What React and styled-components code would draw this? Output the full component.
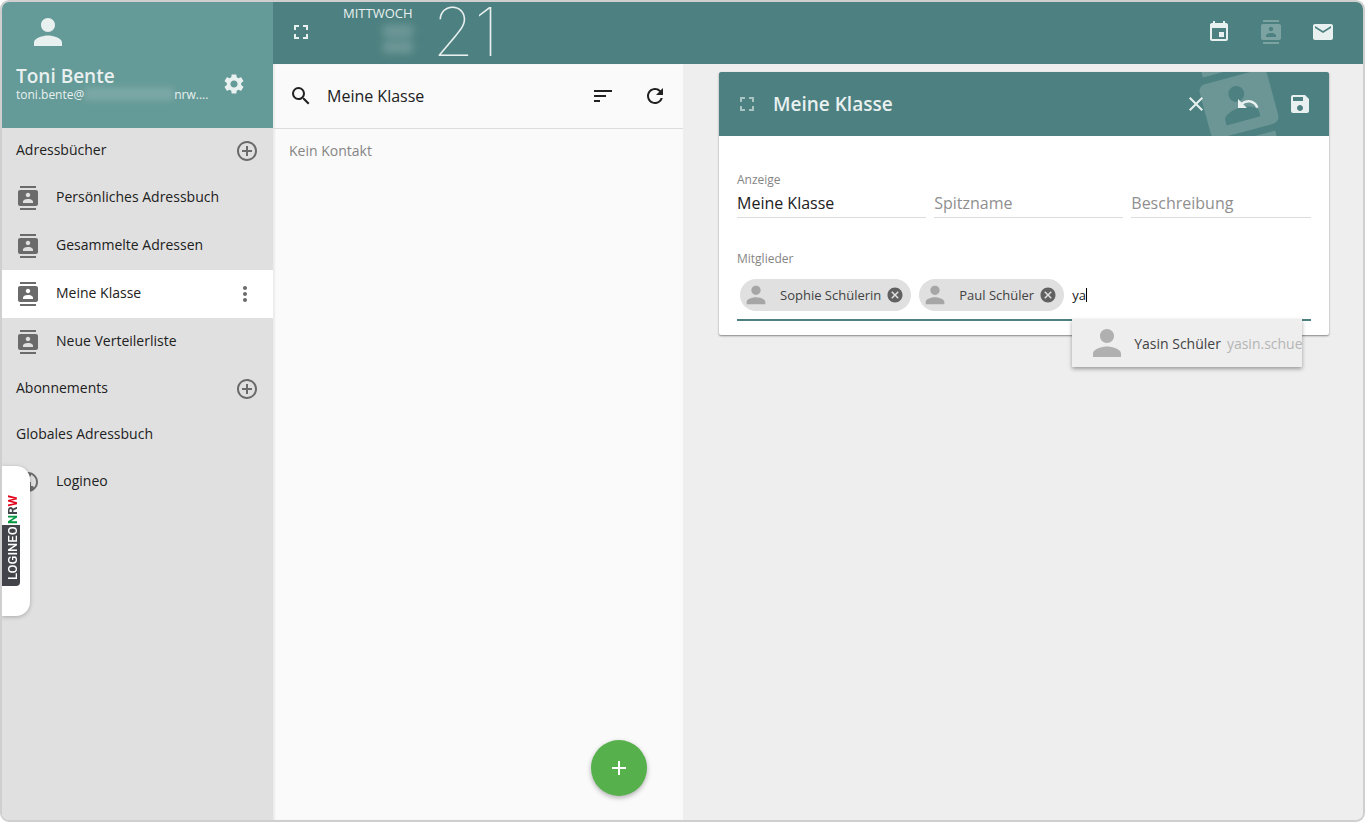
import React, { useState } from "react";
import styled, { createGlobalStyle, ThemeProvider } from "styled-components";
import {
  MdAdd,
  MdAddCircleOutline,
  MdCancel,
  MdClose,
  MdContacts,
  MdEmail,
  MdEvent,
  MdFullscreen,
  MdMoreVert,
  MdPerson,
  MdPublic,
  MdRefresh,
  MdSave,
  MdSearch,
  MdSettings,
  MdSort,
  MdUndo,
} from "react-icons/md";

const theme = {
  primary: "#4d8080",
  primaryLight: "#649a97",
  accent: "#56b04c",
  sidebar: "#e0e0e0",
  list: "#fafafa",
  page: "#eeeeee",
  onPrimary: "#e9f0f0",
  text: "#212121",
  muted: "#858585",
  icon: "#6b6b6b",
  divider: "#dcdcdc",
};

const GlobalStyle = createGlobalStyle`
* { box-sizing: border-box; }
body {
  margin: 0;
  background: #fff;
  color: ${theme.text};
  font-family: "Open Sans", "Noto Sans", sans-serif;
  font-size: 14px;
}
button, input { font: inherit; color: inherit; }
svg { display: block; }
`;

const Frame = styled.div`
  position: relative;
  display: flex;
  min-height: 100vh;
  overflow: hidden;
  border: 2px solid #cfcfcf;
  border-radius: 9px;
  background: ${(props) => props.theme.page};
`;

const IconButton = styled.button`
  display: flex;
  align-items: center;
  justify-content: center;
  flex: none;
  width: ${(props) => props.$size || 40}px;
  height: ${(props) => props.$size || 40}px;
  padding: 0;
  border: none;
  border-radius: 50%;
  background: none;
  color: inherit;
  font-size: ${(props) => props.$icon || 24}px;
  opacity: ${(props) => (props.$dim ? props.$dim : 1)};
  cursor: pointer;
`;

/* sidebar */
const Sidebar = styled.aside`
  flex: none;
  width: 271px;
  background: ${(props) => props.theme.sidebar};
`;

const Profile = styled.div`
  height: 126px;
  padding: 9px 19px 0 14px;
  background: ${(props) => props.theme.primaryLight};
  color: ${(props) => props.theme.onPrimary};
`;

const Avatar = styled.div`
  padding-left: 11px;
  font-size: 42px;
`;

const ProfileRow = styled.div`
  display: flex;
  align-items: center;
  justify-content: space-between;
  margin-top: 11px;
`;

const ProfileName = styled.div`
  font-size: 19px;
  font-weight: 600;
  line-height: 22px;
`;

const ProfileMail = styled.div`
  display: flex;
  font-size: 12px;
  line-height: 16px;
`;

const MailBlur = styled.span`
  width: 90px;
  height: 14px;
  background: rgba(255, 255, 255, 0.14);
  filter: blur(3px);
`;

const SubHeader = styled.div`
  display: flex;
  align-items: center;
  justify-content: space-between;
  height: 46px;
  padding: 0 14px;
  line-height: 20px;
`;

const SubHeaderText = styled.span`
  padding-bottom: 2px;
`;

const BookList = styled.ul`
  margin: 0;
  padding: 0;
  list-style: none;
`;

const BookItem = styled.li`
  display: flex;
  align-items: center;
  height: 48px;
  padding: 0 16px 0 14px;
  background: ${(props) => (props.$active ? "#fff" : "transparent")};
  color: ${(props) => props.theme.icon};
  font-size: 24px;
`;

const BookLink = styled.a`
  flex: 1;
  padding: 0 0 2px 16px;
  color: ${(props) => props.theme.text};
  font-size: 14px;
  line-height: 20px;
  text-decoration: none;
`;

/* logo tab on the left edge */
const LogoTab = styled.a`
  position: absolute;
  left: 0;
  top: 464px;
  display: flex;
  flex-direction: column;
  align-items: flex-start;
  width: 28px;
  height: 150px;
  padding-top: 28px;
  border-radius: 0 14px 14px 0;
  background: #fff;
  box-shadow: 0 1px 4px rgba(0, 0, 0, 0.25);
  font-family: Roboto, sans-serif;
  font-size: 13px;
  line-height: 22px;
  text-decoration: none;
`;

const LogoState = styled.span`
  writing-mode: vertical-rl;
  transform: rotate(180deg);
  width: 18px;
  height: 31px;
  padding-top: 1px;
  color: #43444a;
  font-weight: 700;
`;

const LogoLetter = styled.span`
  color: ${(props) => props.$color};
`;

const LogoName = styled.span`
  writing-mode: vertical-rl;
  transform: rotate(180deg);
  width: 18px;
  height: 61px;
  padding-top: 6px;
  border-radius: 4px 0 0 0;
  background: #43444a;
  color: #fff;
  font-weight: 500;
`;

/* main area */
const Main = styled.div`
  display: flex;
  flex: 1;
  flex-direction: column;
  min-width: 0;
`;

const TopBar = styled.header`
  display: flex;
  align-items: center;
  height: 62px;
  padding: 0 20px 2px 8px;
  background: ${(props) => props.theme.primary};
  color: ${(props) => props.theme.onPrimary};
`;

const DateBox = styled.div`
  display: flex;
  align-items: flex-start;
  flex: 1;
  gap: 20px;
  padding-left: 22px;
`;

const DateText = styled.div`
  display: flex;
  flex-direction: column;
  align-items: flex-end;
  padding-top: 1px;
  font-size: 13px;
  line-height: 20px;
`;

const DateBlur = styled.span`
  width: 30px;
  height: 12px;
  margin: 2px 0;
  background: rgba(255, 255, 255, 0.2);
  filter: blur(4px);
`;

const DayNumber = styled.div`
  font-family: Inter, sans-serif;
  font-size: 67px;
  font-weight: 100;
  line-height: 60px;
`;

const TopActions = styled.nav`
  display: flex;
  gap: 12px;
`;

const Columns = styled.div`
  display: flex;
  flex: 1;
`;

const ListPane = styled.section`
  display: flex;
  flex: none;
  flex-direction: column;
  width: 410px;
  background: ${(props) => props.theme.list};
  box-shadow: inset 2px 0 2px rgba(0, 0, 0, 0.06);
`;

const ListBar = styled.div`
  display: flex;
  align-items: center;
  height: 65px;
  padding: 0 8px;
  border-bottom: 1px solid ${(props) => props.theme.divider};
`;

const ListTitle = styled.h2`
  flex: 1;
  margin: 0;
  padding-left: 6px;
  font-size: 16px;
  font-weight: 400;
  line-height: 24px;
`;

const ListActions = styled.div`
  display: flex;
  gap: 12px;
`;

const EmptyText = styled.p`
  flex: 1;
  margin: 0;
  padding: 12px 16px;
  color: ${(props) => props.theme.muted};
  line-height: 20px;
`;

const AddButton = styled(IconButton)`
  align-self: flex-end;
  margin: 0 36px 24px 0;
  background: ${(props) => props.theme.accent};
  box-shadow: 0 2px 5px rgba(0, 0, 0, 0.3);
  color: #fff;
`;

const DetailPane = styled.section`
  flex: 1;
  min-width: 0;
  padding: 8px 34px 0 36px;
`;

const Card = styled.form`
  border-radius: 2px;
  background: #fff;
  box-shadow: 0 1px 2px rgba(0, 0, 0, 0.45);
`;

const CardHeader = styled.div`
  position: relative;
  display: flex;
  align-items: center;
  height: 64px;
  padding: 0 9px 0 8px;
  overflow: hidden;
  border-radius: 2px 2px 0 0;
  background: ${(props) => props.theme.primary};
  color: ${(props) => props.theme.onPrimary};
`;

const Watermark = styled.div`
  position: absolute;
  top: -10px;
  right: 48px;
  font-size: 84px;
  opacity: 0.2;
  transform: rotate(-15deg);
`;

const CardTitle = styled.h1`
  flex: 1;
  margin: 0;
  padding-left: 6px;
  font-size: 19px;
  font-weight: 600;
  line-height: 24px;
`;

const CardActions = styled.div`
  position: relative;
  display: flex;
  gap: 12px;
`;

const CardBody = styled.div`
  padding: 36px 18px 14px;
`;

const FieldRow = styled.div`
  display: grid;
  grid-template-columns: 20fr 20fr 19fr;
  gap: 8px;
`;

const Field = styled.div`
  display: flex;
  flex-direction: column;
`;

const Label = styled.label`
  display: block;
  height: 16px;
  color: ${(props) => props.theme.muted};
  font-size: 12px;
  line-height: 16px;
`;

const TextInput = styled.input`
  width: 100%;
  height: 30px;
  padding: 0;
  border: none;
  border-bottom: 1px solid ${(props) => props.theme.divider};
  outline: none;
  background: none;
  font-size: 16px;
  &::placeholder {
    color: #8f8f8f;
    opacity: 1;
  }
`;

const Members = styled.div`
  padding-top: 33px;
`;

const ChipRow = styled.div`
  display: flex;
  align-items: center;
  gap: 8px;
  padding: 12px 3px 8px;
  border-bottom: 2px solid ${(props) => props.theme.primary};
`;

const Chip = styled.span`
  display: flex;
  align-items: center;
  height: 32px;
  padding: 0 7px 0 2px;
  border-radius: 16px;
  background: #e0e0e0;
  color: #424242;
  font-size: 13px;
`;

const ChipIcon = styled.span`
  color: #a6a6a6;
  font-size: 28px;
`;

const ChipText = styled.span`
  padding: 0 5px 0 10px;
`;

const ChipRemove = styled(IconButton)`
  color: #616161;
`;

const Search = styled.div`
  position: relative;
  display: flex;
  align-items: center;
`;

const SearchInput = styled.input`
  field-sizing: content;
  padding: 0;
  border: none;
  outline: none;
  background: none;
  font-size: 13px;
`;

const Caret = styled.span`
  width: 1px;
  height: 14px;
  background: #000;
`;

const Suggestions = styled.ul`
  position: absolute;
  top: 100%;
  left: 0;
  width: 230px;
  margin: 15px 0 0;
  padding: 0;
  overflow: hidden;
  background: #eeeeee;
  box-shadow: 0 2px 4px rgba(0, 0, 0, 0.35);
  list-style: none;
`;

const Suggestion = styled.li`
  display: flex;
  align-items: center;
  height: 48px;
  padding-left: 14px;
  white-space: nowrap;
`;

const SuggestionIcon = styled.span`
  color: #b0b0b0;
  font-size: 42px;
`;

const SuggestionName = styled.span`
  padding: 0 6px;
  color: #424242;
`;

const SuggestionMail = styled.span`
  color: #b5b5b5;
`;

const books = [
  "Persönliches Adressbuch",
  "Gesammelte Adressen",
  "Meine Klasse",
  "Neue Verteilerliste",
];

const App = () => {
  const [name, setName] = useState("Meine Klasse");
  const [query, setQuery] = useState("ya");
  const [members, setMembers] = useState(["Sophie Schülerin", "Paul Schüler"]);

  return (
    <ThemeProvider theme={theme}>
      <GlobalStyle />
      <Frame>
        <Sidebar>
          <Profile>
            <Avatar><MdPerson /></Avatar>
            <ProfileRow>
              <div>
                <ProfileName>Toni Bente</ProfileName>
                <ProfileMail>
                  toni.bente@<MailBlur />nrw....
                </ProfileMail>
              </div>
              <IconButton aria-label="Einstellungen"><MdSettings /></IconButton>
            </ProfileRow>
          </Profile>
          <SubHeader>
            <SubHeaderText>Adressbücher</SubHeaderText>
            <IconButton $size={24} aria-label="Adressbuch hinzufügen"><MdAddCircleOutline color={theme.icon} /></IconButton>
          </SubHeader>
          <BookList>
            {books.map((book) => (
              <BookItem key={book} $active={book === "Meine Klasse"}>
                <MdContacts />
                <BookLink href="#">{book}</BookLink>
                {book === "Meine Klasse" && (
                  <IconButton $size={24} aria-label="Optionen"><MdMoreVert /></IconButton>
                )}
              </BookItem>
            ))}
          </BookList>
          <SubHeader>
            <SubHeaderText>Abonnements</SubHeaderText>
            <IconButton $size={24} aria-label="Abonnement hinzufügen"><MdAddCircleOutline color={theme.icon} /></IconButton>
          </SubHeader>
          <SubHeader>
            <SubHeaderText>Globales Adressbuch</SubHeaderText>
          </SubHeader>
          <BookList>
            <BookItem>
              <MdPublic />
              <BookLink href="#">Logineo</BookLink>
            </BookItem>
          </BookList>
        </Sidebar>

        <Main>
          <TopBar>
            <IconButton aria-label="Vollbild"><MdFullscreen /></IconButton>
            <DateBox>
              <DateText>
                MITTWOCH
                <DateBlur />
                <DateBlur />
              </DateText>
              <DayNumber>21</DayNumber>
            </DateBox>
            <TopActions>
              <IconButton aria-label="Kalender"><MdEvent /></IconButton>
              <IconButton $dim={0.3} aria-label="Adressbuch"><MdContacts /></IconButton>
              <IconButton aria-label="E-Mail"><MdEmail /></IconButton>
            </TopActions>
          </TopBar>

          <Columns>
            <ListPane>
              <ListBar>
                <IconButton aria-label="Suchen"><MdSearch /></IconButton>
                <ListTitle>Meine Klasse</ListTitle>
                <ListActions>
                  <IconButton aria-label="Sortieren"><MdSort /></IconButton>
                  <IconButton aria-label="Aktualisieren"><MdRefresh /></IconButton>
                </ListActions>
              </ListBar>
              <EmptyText>Kein Kontakt</EmptyText>
              <AddButton $size={56} aria-label="Neu"><MdAdd /></AddButton>
            </ListPane>

            <DetailPane>
              <Card onSubmit={(e) => e.preventDefault()}>
                <CardHeader>
                  <Watermark><MdContacts /></Watermark>
                  <IconButton type="button" $dim={0.6} aria-label="Vollbild"><MdFullscreen /></IconButton>
                  <CardTitle>Meine Klasse</CardTitle>
                  <CardActions>
                    <IconButton type="button" aria-label="Schließen"><MdClose /></IconButton>
                    <IconButton type="button" aria-label="Rückgängig"><MdUndo /></IconButton>
                    <IconButton type="submit" aria-label="Speichern"><MdSave /></IconButton>
                  </CardActions>
                </CardHeader>
                <CardBody>
                  <FieldRow>
                    <Field>
                      <Label htmlFor="display">Anzeige</Label>
                      <TextInput id="display" value={name} onChange={(e) => setName(e.target.value)} />
                    </Field>
                    <Field>
                      <Label htmlFor="nick" />
                      <TextInput id="nick" placeholder="Spitzname" aria-label="Spitzname" />
                    </Field>
                    <Field>
                      <Label htmlFor="description" />
                      <TextInput id="description" placeholder="Beschreibung" aria-label="Beschreibung" />
                    </Field>
                  </FieldRow>
                  <Members>
                    <Label htmlFor="members">Mitglieder</Label>
                    <ChipRow>
                      {members.map((member) => (
                        <Chip key={member}>
                          <ChipIcon><MdPerson /></ChipIcon>
                          <ChipText>{member}</ChipText>
                          <ChipRemove
                            type="button"
                            $size={18}
                            $icon={18}
                            aria-label={member + " entfernen"}
                            onClick={() => setMembers(members.filter((m) => m !== member))}
                          >
                            <MdCancel />
                          </ChipRemove>
                        </Chip>
                      ))}
                      <Search>
                        <SearchInput id="members" value={query} onChange={(e) => setQuery(e.target.value)} />
                        <Caret />
                        <Suggestions>
                          <Suggestion>
                            <SuggestionIcon><MdPerson /></SuggestionIcon>
                            <SuggestionName>Yasin Schüler</SuggestionName>
                            <SuggestionMail>yasin.schuel</SuggestionMail>
                          </Suggestion>
                        </Suggestions>
                      </Search>
                    </ChipRow>
                  </Members>
                </CardBody>
              </Card>
            </DetailPane>
          </Columns>
        </Main>

        <LogoTab href="#" aria-label="Logineo NRW">
          <LogoState>
            <LogoLetter $color="#009640">N</LogoLetter>R<LogoLetter $color="#e2001a">W</LogoLetter>
          </LogoState>
          <LogoName>LOGINEO</LogoName>
        </LogoTab>
      </Frame>
    </ThemeProvider>
  );
};

export default App;
